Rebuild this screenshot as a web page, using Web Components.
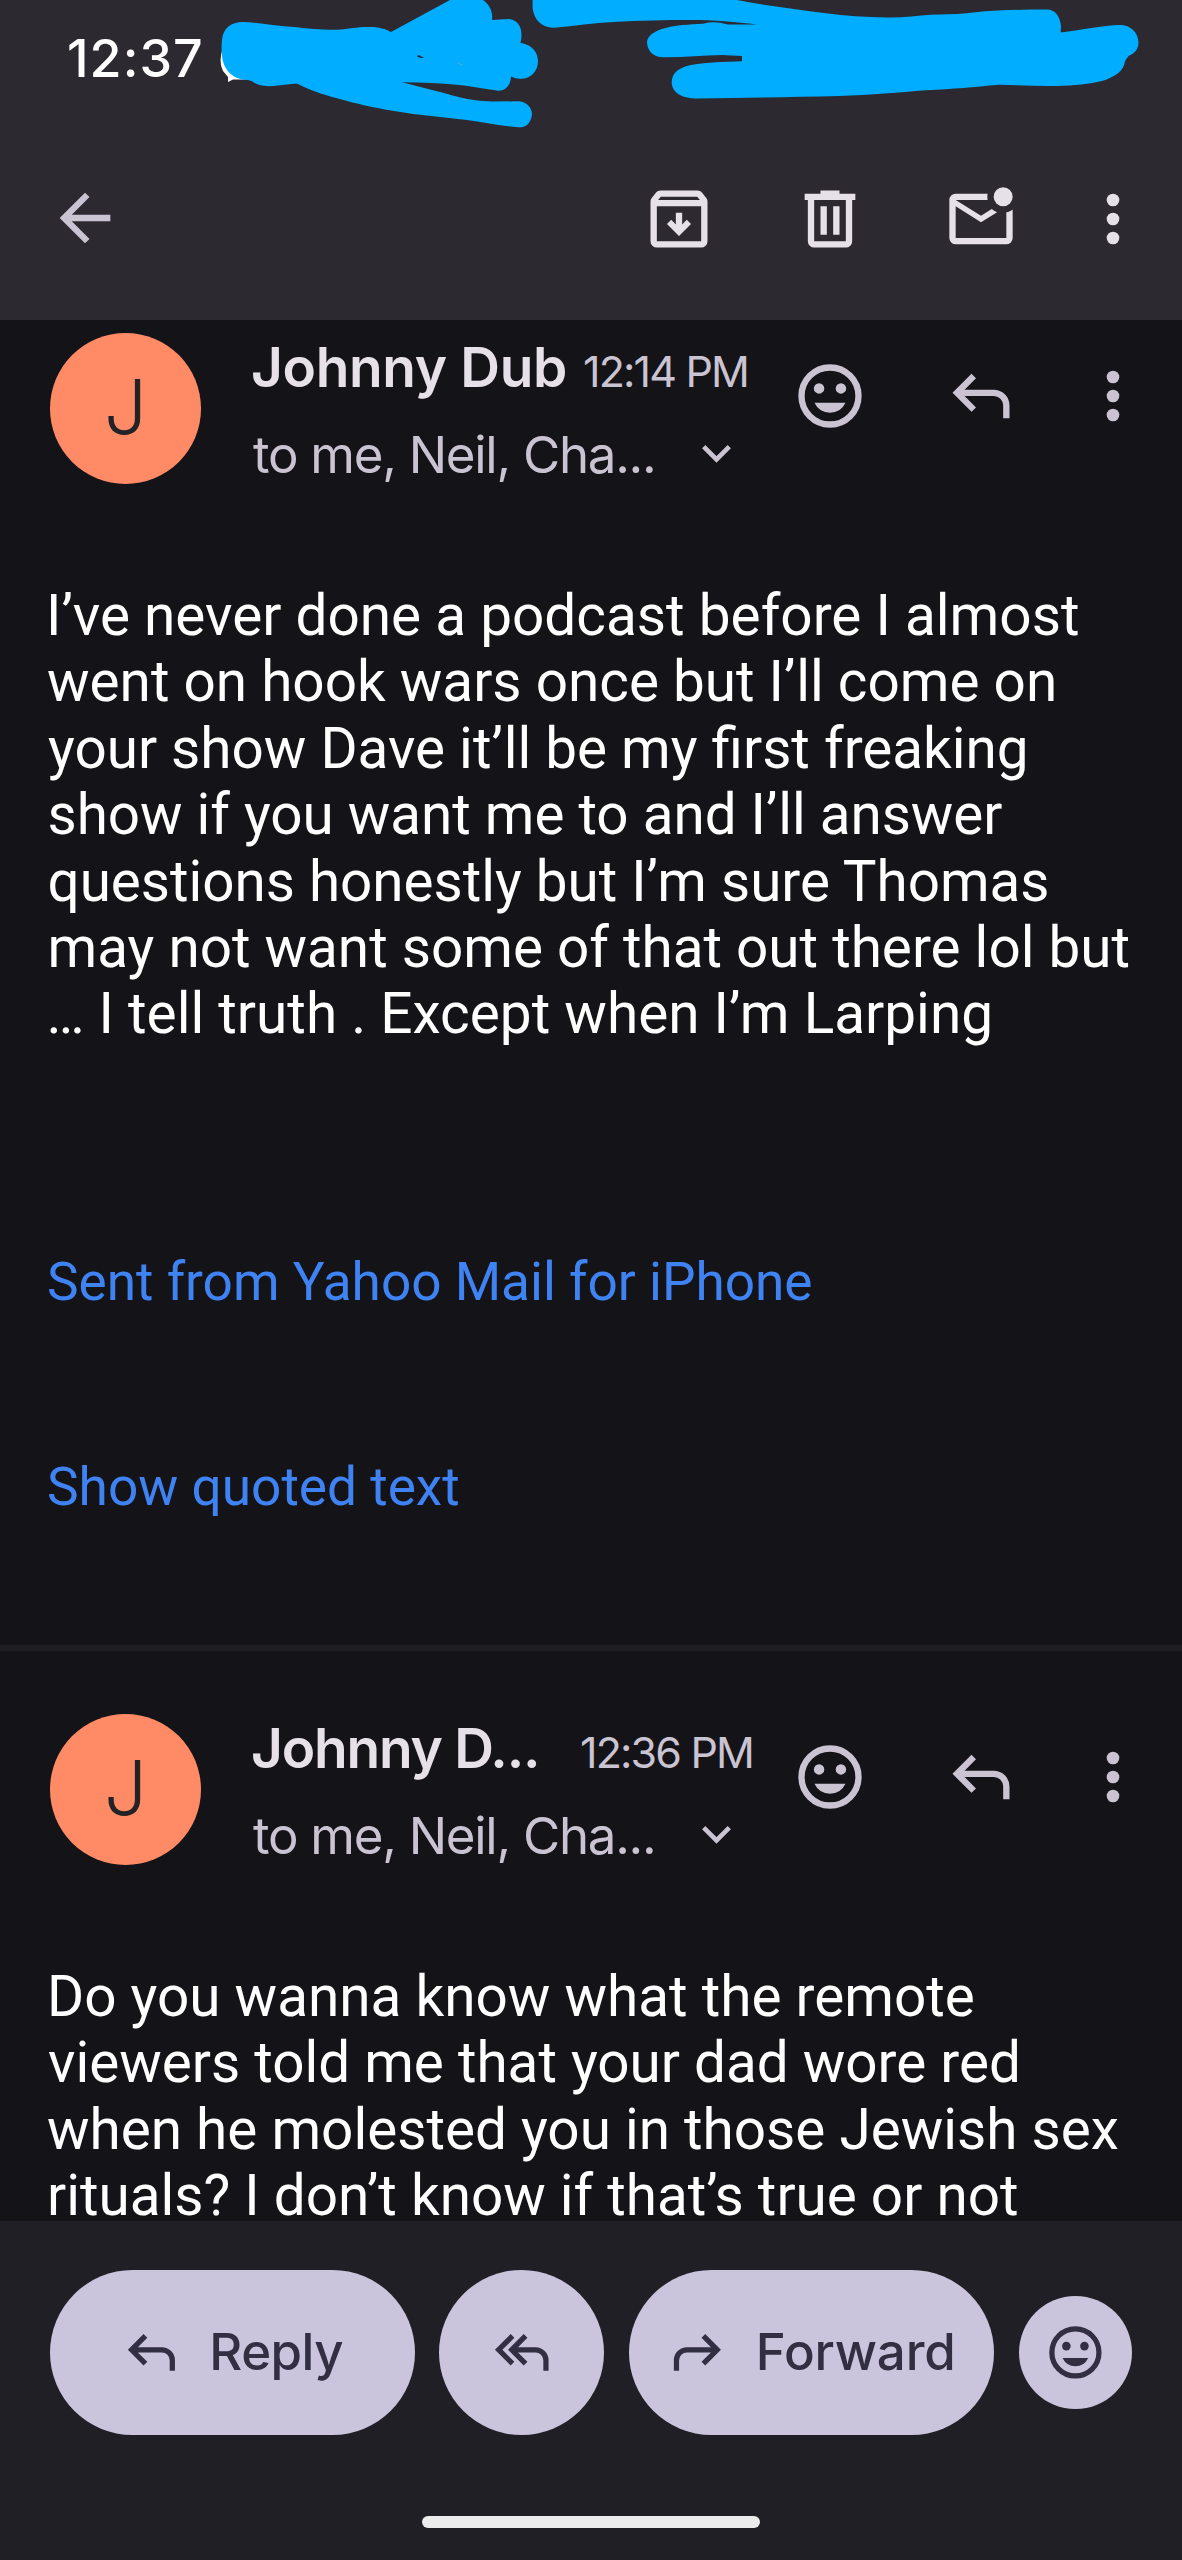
<!DOCTYPE html>
<html lang="en">
<head>
<meta charset="utf-8">
<title>Mail thread</title>
<style>
html,body{margin:0;padding:0;background:#141318}
body{width:1182px;height:2560px;overflow:hidden;font-family:Roboto,"Liberation Sans",sans-serif}
</style>
</head>
<body>
<mail-screen></mail-screen>
<script>
const define = (name, html, init) => customElements.define(name, class extends HTMLElement {
  constructor() {
    super();
    const t = document.createElement('template');
    t.innerHTML = html;
    this.attachShadow({mode: 'open'}).append(t.content.cloneNode(true));
  }
  connectedCallback() { if (init) init.call(this, this.shadowRoot); }
});

// One line of text fitted to an exact ink width, with its baseline set from the top of its box.
// By default the tracking is adjusted; with the "scale" attribute the font size is, which keeps ligatures.
const ctx = document.createElement('canvas').getContext('2d');
define('fit-text', `<style>:host{display:block;flex:none;white-space:pre}span{display:block;width:max-content}</style><span><slot></slot></span>`,
function (root) {
  const cs = getComputedStyle(this), s = root.querySelector('span'), text = this.textContent;
  const measure = size => { ctx.font = `${cs.fontWeight} ${size}px ${cs.fontFamily}`; return ctx.measureText(text); };
  const inkOf = m => m.actualBoundingBoxLeft + m.actualBoundingBoxRight;
  const size = parseFloat(cs.fontSize), w = +this.getAttribute('w'), base = +this.getAttribute('base');
  let m = measure(size);
  if (this.hasAttribute('scale')) {
    const fitted = size * w / inkOf(m);
    s.style.fontSize = fitted + 'px';
    m = measure(fitted);
  } else if (text.length > 1) {
    s.style.letterSpacing = (w - inkOf(m)) / (text.length - 1) + 'px';
  }
  s.style.marginLeft = m.actualBoundingBoxLeft + 'px';
  s.style.lineHeight = 2 * base - (m.fontBoundingBoxAscent - m.fontBoundingBoxDescent) + 'px';
  this.style.width = w + 'px';
  this.style.height = this.getAttribute('h') + 'px';
});

const smile = '<circle cx="12" cy="12" r="9" fill="none" stroke="currentColor" stroke-width="2"/><circle cx="8.55" cy="9.6" r="1.65"/><circle cx="15.45" cy="9.6" r="1.65"/><path d="M7.1 14.15h9.8q-1.5 3.15-4.9 3.15t-4.9-3.15Z"/>';
const reply = '<path d="M19 19v-4q0-1.25-.875-2.125T16 12H6.825l3.6 3.6L9 17l-6-6 6-6 1.425 1.4L6.825 10H16q2.075 0 3.538 1.463T21 15v4Z"/>';
const icons = {
  back: '<path d="m7.825 13 5.6 5.6L12 20l-8-8 8-8 1.425 1.4-5.6 5.6H20v2Z"/>',
  archive: '<path fill-rule="evenodd" d="M5 21q-.825 0-1.412-.587Q3 19.825 3 19V6.525q0-.35.113-.675.112-.325.337-.6L4.7 3.725q.275-.35.687-.538Q5.8 3 6.25 3h11.5q.45 0 .863.187.412.188.687.538l1.25 1.525q.225.275.337.6.113.325.113.675V19q0 .825-.587 1.413Q19.825 21 19 21ZM5.4 6h13.2l-.85-1H6.25ZM5 19h14V8H5Z"/><path d="m12 17.4 3.8-3.8-1.35-1.35L13 13.7V10h-2v3.7l-1.45-1.45L8.2 13.6Z"/>',
  trash: '<path fill-rule="evenodd" d="M7 21q-.825 0-1.412-.587Q5 19.825 5 19V6H4V4h5V3h6v1h5v2h-1v13q0 .825-.587 1.413Q17.825 21 17 21ZM17 6H7v13h10ZM9 17h2V8H9Zm4 0h2V8h-2Z"/>',
  unread: '<path d="M4 20q-.825 0-1.413-.587Q2 18.825 2 18V6q0-.825.587-1.412Q3.175 4 4 4h10.1q-.1.5-.1 1t.1 1H4l8 5 3.4-2.15q.65.6 1.7 1L12 13 4 8v10h16V9.9q.575-.125 1.075-.35T22 9v9q0 .825-.587 1.413Q20.825 20 20 20Z"/><circle cx="19" cy="5" r="3"/>',
  more: '<circle cx="12" cy="6" r="2"/><circle cx="12" cy="12" r="2"/><circle cx="12" cy="18" r="2"/>',
  smile, reply,
  replyall: '<path d="M7.5 17 1.5 11l6-6 1.42 1.42L4.35 11l4.57 4.58Z"/><path d="M20 19v-4q0-1.25-.875-2.125T17 12h-6.675l3.6 3.6L12.5 17l-6-6 6-6 1.425 1.4-3.6 3.6H17q2.075 0 3.538 1.463T22 15v4Z"/>',
  forward: `<g transform="matrix(-1 0 0 1 24 0)">${reply}</g>`
};
define('mail-icon', '<style>:host{display:block;flex:none;width:76px;height:76px}svg{display:block;width:100%;height:100%;fill:currentColor;overflow:visible}</style><svg viewBox="0 0 24 24"></svg>',
function (root) { root.querySelector('svg').innerHTML = icons[this.getAttribute('name')]; });

// Marker strokes painted over the notification and system icons.
define('marker-strokes', `<style>:host{display:block;position:absolute;left:0;top:0;width:1182px;height:140px}svg{display:block}</style>
<svg width="1182" height="140" viewBox="0 0 1182 140">
<path fill="#fff" d="M223 48Q218 61 223 71L228 77V82L233 79.500H245L252 74 226 46Z"/>
<g fill="#00adff">
<path d="M222 40C223 28 231 22 243 22C260 22.500 275 26 291 26.700C309 28.500 322 30 337 29.800C350 29 357 26.800 369 27C379 27 386 29 391 32L450 0H483C490 5 493 12 492 20L509 19C518 20 524 28 520.500 43C531 44 538 52 538 61C538 72 530 79 520.500 78.700Q515 78.700 511 76.500C511 84 506 91 498.700 90.700C484 89 473 86.500 459 85C440 83 422 82.500 402 82.300L438 91.500C456 96 468 101 492 101.500L519 101.300C527 102 532 108 532 114.500C531 123 526 128 518 127.300C499 126 483 122 467 120C443 117 420 115.500 394 111C373 107.500 357 104 337 98.300C321 94 310 90 296.600 83.500L273 86Q259 87 252.600 81.500Q249 79.500 244 79.700C230 78 222 66 222 54Q221 49 222 40Z"/>
<path d="M532.600 0V8C534 20 542 28 554 27.700C575 26 594 23 613 22C640 20.500 665 20 691 20C715 20 735 22 757 24.500H728L720 22.700Q711 21.600 703 23.700C690 24.300 674 25 662 29C650 33 647 38 647 43C648 52 654 57 663 57.300C683 57.500 703 55.500 722 55L742 56V61.300C724 62 708 62 691 65C676 68 671.500 75 671.700 83C672.500 92 680 98.300 698 98.500C745 98 793 97 839 96C871 95 899 92.500 926 90.300C954 89 973 87 999 84.700C1018 85 1037 86.500 1057 86C1074 85.500 1090 84 1102 81C1115 77 1124 71 1125 61L1128.500 56C1136 53 1138.500 48 1138.500 42C1138 32 1130 24 1117.700 25C1099 26 1081 30 1060.700 32.500L1061 26C1060 16 1055 9.500 1047 9.500C1024 9.500 1006 10 985 11.300C975 12 967 13.500 957 14L931 14.700C917 15.500 902 18 887 17.500C866 17 845 16 826 13.300C796 9 767 6 737 0Z"/>
</g>
<path fill="#20303c" d="M417 56L419 55 424 58Q418 58 417 56Z"/><path stroke="#4ba9d9" d="M457 63L463 65"/>
</svg>`);

define('top-bar', `<style>
:host{display:block;position:relative;flex:none;height:320px;background:#2c2930;color:#e6e0e9}
.status{height:140px;padding-left:69px;box-sizing:border-box;font:550 52px Inter,sans-serif;color:#fff}
.bar{display:flex;margin:41px 31px 0 48px;justify-content:flex-end}
.back{color:#cac4d2;margin:-1px auto 0 -1px}
.g{margin-right:75px}.n{margin-right:56px}
</style>
<div class="status"><fit-text w="132" base="77.500" h="140">12:37</fit-text></div>
<div class="bar"><mail-icon class="back" name="back"></mail-icon><mail-icon class="g" name="archive"></mail-icon><mail-icon class="g" name="trash"></mail-icon><mail-icon class="n" name="unread"></mail-icon><mail-icon name="more"></mail-icon></div>
<marker-strokes></marker-strokes>`);

define('sender-row', `<style>
:host{display:flex;height:151px;padding:0 31px 0 50px;color:#cac4d2}
.av{flex:none;box-sizing:border-box;width:151px;height:151px;border-radius:50%;background:#ff8b66;padding-left:58px;color:#232227;font:350 76px Inter,sans-serif}
.who{flex:none;width:539px;margin-left:52px}
.line{display:flex;justify-content:flex-start}
.name{font:600 55px Inter,sans-serif;color:#e6e0e9}
.time{font:400 43px Inter,sans-serif}
.to{font:400 51px Inter,sans-serif}
.chev{flex:none;margin:42px 0 0 49px}
.act{display:flex;margin-top:25px}
.g{margin-right:75px}.n{margin-right:56px}
</style>
<div class="av"><fit-text w="33" base="101.500" h="151">J</fit-text></div>
<div class="who"><div class="line" id="l1"></div>
<div class="line"><fit-text class="to" w="400" base="70" h="81">to me, Neil, Cha...</fit-text><svg class="chev" width="29" height="18" viewBox="0 0 29 18"><path d="M1.700 1.700 14.500 14.500 27.300 1.700" fill="none" stroke="currentColor" stroke-width="4.600"/></svg></div></div>
<div class="act"><mail-icon class="g" name="smile"></mail-icon><mail-icon class="n" name="reply"></mail-icon><mail-icon name="more"></mail-icon></div>`,
function (root) {
  const a = k => this.getAttribute(k);
  root.getElementById('l1').innerHTML = `<fit-text class="name" w="${a('name-w')}" base="54.500" h="70">${a('name')}</fit-text><fit-text class="time" style="margin-left:${a('gap')}px" w="${a('time-w')}" base="54" h="70">${a('time')}</fit-text>`;
});

define('mail-body', `<style>:host{display:block;font:400 56.400px Roboto,sans-serif;color:#fff;padding-left:48px}</style><slot></slot>`);
define('mail-link', `<style>:host{display:block;font:400 56.400px Roboto,sans-serif;color:#3f83f3;padding-left:49px}</style><slot></slot>`);

define('thread-view', `<style>
:host{display:block;flex:1;min-height:0;overflow:hidden;background:#141318}
sender-row{margin-top:13px}.b{margin-top:99px}
hr{border:0;height:6px;background:#1f1e23;margin:125.700px 0 0}
.second{margin-top:63px}
</style>
<sender-row name="Johnny Dub" name-w="312" gap="20" time="12:14 PM" time-w="162"></sender-row>
<mail-body class="b">
<fit-text scale style="margin-left:3px" w="1027" base="52" h="66.420">I’ve never done a podcast before I almost</fit-text>
<fit-text scale w="1006" base="52" h="66.420">went on hook wars once but I’ll come on</fit-text>
<fit-text scale w="977" base="52" h="66.420">your show Dave it’ll be my first freaking</fit-text>
<fit-text scale style="margin-left:1.500px" w="953" base="52" h="66.420">show if you want me to and I’ll answer</fit-text>
<fit-text scale style="margin-left:1.500px" w="999" base="52" h="66.420">questions honestly but I’m sure Thomas</fit-text>
<fit-text scale style="margin-left:2.500px" w="1078" base="52" h="66.420">may not want some of that out there lol but</fit-text>
<fit-text scale style="margin-left:2.500px" w="939" base="52" h="66.420">… I tell truth . Except when I’m Larping</fit-text>
</mail-body>
<mail-link style="margin-top:200px"><fit-text scale w="762" base="52" h="66.420">Sent from Yahoo Mail for iPhone</fit-text></mail-link>
<mail-link style="margin-top:138.600px"><fit-text scale w="409.500" base="52" h="66.420">Show quoted text</fit-text></mail-link>
<hr>
<sender-row class="second" name="Johnny D..." name-w="284" gap="45" time="12:36 PM" time-w="170"></sender-row>
<mail-body class="b">
<fit-text scale style="margin-left:3px" w="922" base="52" h="66.420">Do you wanna know what the remote</fit-text>
<fit-text scale w="969" base="52" h="66.420">viewers told me that your dad wore red</fit-text>
<fit-text scale w="1070" base="52" h="66.420">when he molested you in those Jewish sex</fit-text>
<fit-text scale style="margin-left:2px" w="967" base="52" h="58">rituals? I don’t know if that’s true or not</fit-text>
</mail-body>`);

define('action-pill', `<style>
:host{display:flex;flex:none;box-sizing:border-box;width:165px;height:165px;border-radius:83px;background:#cac4dc;color:#322f42;font:480 51px Inter,sans-serif}
</style><slot></slot>`);

define('bottom-bar', `<style>
:host{display:block;flex:none;height:339px;box-sizing:border-box;padding:49px 50px 0;background:#201f25}
.row{display:flex;align-items:center}
.wide{width:365px}
mail-icon{width:62.800px;height:62.800px;margin-top:51px}
.home{width:338px;height:12px;border-radius:6px;background:#ececec;margin:81px auto 0}
</style>
<div class="row">
<action-pill class="wide"><mail-icon name="reply" style="margin-left:70px"></mail-icon><fit-text style="margin-left:30.500px" w="130" base="100" h="165">Reply</fit-text></action-pill>
<action-pill style="margin-left:24px"><mail-icon name="replyall" style="margin-left:51.500px"></mail-icon></action-pill>
<action-pill class="wide" style="margin-left:25px"><mail-icon name="forward" style="margin-left:37px"></mail-icon><fit-text style="margin-left:31px" w="192.500" base="100" h="165">Forward</fit-text></action-pill>
<action-pill style="margin-left:25px;width:113px;height:113px"><mail-icon name="smile" style="margin:25px 0 0 25px"></mail-icon></action-pill>
</div>
<div class="home"></div>`);

define('mail-screen', `<style>:host{display:flex;flex-direction:column;width:1182px;height:2560px;overflow:hidden}</style>
<top-bar></top-bar><thread-view></thread-view><bottom-bar></bottom-bar>`);
</script>
</body>
</html>
